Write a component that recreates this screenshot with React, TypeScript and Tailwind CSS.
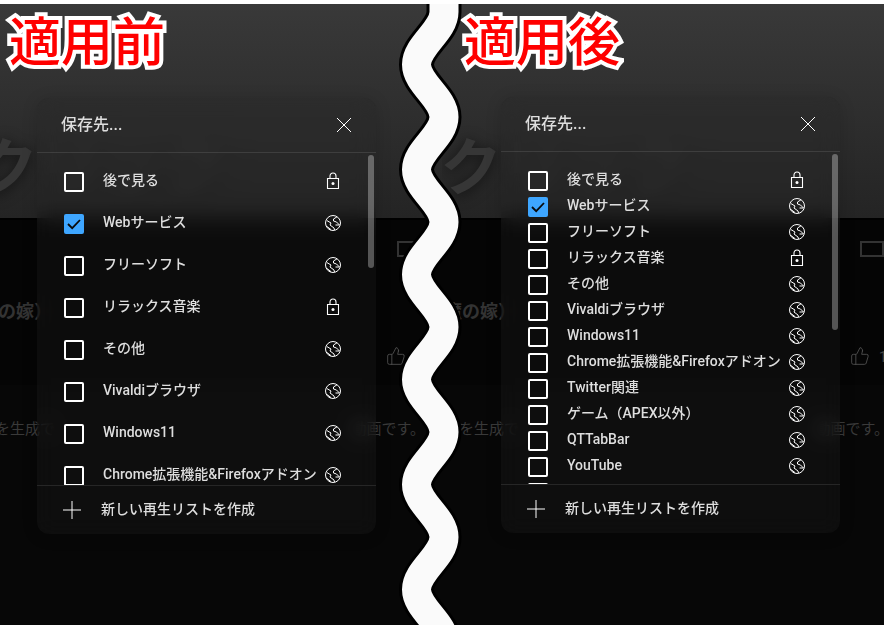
import { ThumbsUp } from 'lucide-react';

const font = "font-['Roboto','Noto_Sans_CJK_JP',sans-serif]";

const before = [
  { name: '後で見る', lock: true },
  { name: 'Webサービス', checked: true },
  { name: 'フリーソフト' },
  { name: 'リラックス音楽', lock: true },
  { name: 'その他' },
  { name: 'Vivaldiブラウザ' },
  { name: 'Windows11' },
  { name: 'Chrome拡張機能&Firefoxアドオン' },
];

const after = [
  { name: '後で見る', lock: true },
  { name: 'Webサービス', checked: true },
  { name: 'フリーソフト' },
  { name: 'リラックス音楽', lock: true },
  { name: 'その他' },
  { name: 'Vivaldiブラウザ' },
  { name: 'Windows11' },
  { name: 'Chrome拡張機能&Firefoxアドオン' },
  { name: 'Twitter関連' },
  { name: 'ゲーム（APEX以外）' },
  { name: 'QTTabBar' },
  { name: 'YouTube' },
  { name: '' },
];

function Globe() {
  return (
    <svg width="18" height="18" viewBox="0 0 18 18" fill="none" stroke="white" strokeWidth="1">
      <circle cx="9" cy="9" r="7.5" />
      <path d="M2.3 12 L7 15.6 M2.8 6.5 L7 9 L6 11 L10 14 L10.5 16 M13 2.8 L9.5 5 L9.5 7 L12.5 8 L15.5 11 L11.5 11" />
    </svg>
  );
}

function Lock() {
  return (
    <svg width="14" height="18" viewBox="0 0 14 18" fill="none" stroke="white" strokeWidth="1.1">
      <path d="M1.5 6.5 H12.5 V16.5 H1.5 Z M4 6.5 V4 C4 2.2 5.2 1 7 1 C8.8 1 10 2.2 10 4 V6.5" />
      <circle cx="7" cy="11.5" r="1.5" fill="white" stroke="none" />
    </svg>
  );
}

function Row({ name, lock, checked, rowClass }: { name: string; lock?: boolean; checked?: boolean; rowClass: string }) {
  return (
    <div className={`flex items-center shrink-0 pl-[27px] pr-[34px] ${rowClass}`}>
      {checked ? (
        <div className="w-5 h-5 rounded-[2px] bg-[#3ea6ff] flex items-center justify-center shrink-0">
          <svg width="16" height="16" viewBox="0 0 16 16" fill="none" stroke="#0a0a0a" strokeWidth="1.8">
            <path d="M2 8 L6.2 12.2 L14 4" />
          </svg>
        </div>
      ) : (
        <div className="w-5 h-5 rounded-[2px] border-2 border-white shrink-0" />
      )}
      <span className="ml-[19px] flex-1 text-[14px] leading-none font-medium text-[#dedede] whitespace-nowrap -translate-y-0.5">{name}</span>
      <div className="w-[18px] flex justify-center shrink-0 -translate-y-px">{name && (lock ? <Lock /> : <Globe />)}</div>
    </div>
  );
}

function Panel({ items, rowClass, listClass, thumbClass, panelClass }: {
  items: { name: string; lock?: boolean; checked?: boolean }[];
  rowClass: string;
  listClass: string;
  thumbClass: string;
  panelClass: string;
}) {
  return (
    <div className={`absolute w-[339px] h-[436px] rounded-xl bg-[#242424]/25 backdrop-blur-[10px] shadow-[0_2px_16px_rgba(0,0,0,0.15)] flex flex-col ${panelClass}`}>
      <div className="h-[55px] shrink-0 border-b border-white/10 flex items-center justify-between pl-[24px] pr-[24px]">
        <span className="text-[16px] font-medium text-[#dedede]">保存先...</span>
        <svg width="16" height="16" viewBox="0 0 16 16" stroke="white" strokeWidth="1">
          <path d="M1 1 L15 15 M15 1 L1 15" />
        </svg>
      </div>
      <div className={`relative h-[332px] overflow-hidden flex flex-col ${listClass}`}>
        {items.map(item => (
          <Row key={item.name || 'next'} {...item} rowClass={rowClass} />
        ))}
        <div className={`absolute right-[2px] w-1.5 top-[2px] rounded-[3px] bg-white/30 ${thumbClass}`} />
      </div>
      <div className="flex-1 border-t border-white/10 flex items-center pl-[26px]">
        <svg width="18" height="18" viewBox="0 0 18 18" stroke="white" strokeWidth="1">
          <path d="M9 0 V18 M0 9 H18" />
        </svg>
        <span className="ml-[20px] text-[14px] font-medium text-[#dedede] -translate-y-px">新しい再生リストを作成</span>
      </div>
    </div>
  );
}

function Backdrop({ side }: { side: 'left' | 'right' }) {
  const isLeft = side === 'left';
  return (
    <div className="absolute inset-0 flex flex-col">
      <div className="relative h-[214px] shrink-0 bg-gradient-to-b from-[#393939] to-[#242424] overflow-hidden">
        <span className={`absolute top-[134px] text-[62px] leading-none font-bold text-[#363636] [text-shadow:0_2px_14px_rgba(0,0,0,0.55)] whitespace-nowrap ${isLeft ? '-left-[24px]' : '-left-[2px]'}`}>
          クリック
        </span>
      </div>
      <div className="h-[2px] bg-black" />
      <div className="relative h-[165px] shrink-0 bg-[#050505]">
        <div className={`absolute top-[21px] w-6 h-4 border-2 border-[#333] ${isLeft ? 'left-[397px]' : 'left-[418px]'}`} />
        <span className={`absolute top-[78px] text-[18px] font-bold text-[#333] whitespace-nowrap ${isLeft ? '-left-[2px]' : 'left-[2px]'}`}>
          {isLeft ? 'の嫁）' : '魔の嫁）'}
        </span>
        <ThumbsUp className={`absolute top-[126px] ${isLeft ? 'left-[386px]' : 'left-[408px]'}`} size={20} strokeWidth={1} color="#555" />
        {!isLeft && <span className="absolute top-[127px] left-[437px] text-[14px] text-[#444]">1</span>}
      </div>
      <div className="relative flex-1 bg-[#070707]">
        <div className={`absolute top-[33px] flex justify-between text-[15px] text-[#3a3a3a] whitespace-nowrap ${isLeft ? 'left-[-5px] w-[430px]' : 'left-[17px] w-[430px]'}`}>
          <span>を生成で</span>
          <span>動画です。</span>
        </div>
      </div>
    </div>
  );
}

function Label({ text, labelClass }: { text: string; labelClass: string }) {
  return (
    <span className={`absolute top-[8px] text-[52px] leading-[64px] font-medium text-[#ff0000] [-webkit-text-stroke:8px_white] [paint-order:stroke_fill] whitespace-nowrap ${labelClass}`}>
      {text}
    </span>
  );
}

// sine-like squiggle: alternating extremes every 52.5px, y is relative to the svg (top-1)
function buildWave() {
  const half = 52.5;
  const handle = 19;
  let x = 444;
  let y = 8;
  let d = `M444 -10 L${x} ${y}`;
  for (let i = 0; i < 12; i++) {
    const nx = x === 444 ? 416.5 : 444;
    const ny = y + half;
    d += ` C${x} ${y + handle} ${nx} ${ny - handle} ${nx} ${ny}`;
    x = nx;
    y = ny;
  }
  return d;
}

const wave = buildWave();

export default function App() {
  return (
    <div className={`relative w-[884px] h-[625px] overflow-hidden bg-white ${font}`}>
      <div className="h-1 bg-white" />
      <div className="flex h-[621px]">
        <section className="relative w-[442px] overflow-hidden">
          <Backdrop side="left" />
          <Panel
            items={before}
            rowClass="h-[42px]"
            listClass="pt-2"
            thumbClass="h-[113px]"
            panelClass="left-[37px] top-[94px]"
          />
          <Label text="適用前" labelClass="left-[9px]" />
        </section>
        <section className="relative w-[442px] overflow-hidden">
          <Backdrop side="right" />
          <Panel
            items={after}
            rowClass="h-[26px]"
            listClass="pt-4"
            thumbClass="h-[176px]"
            panelClass="left-[59px] top-[93px]"
          />
          <Label text="適用後" labelClass="left-[22px]" />
        </section>
      </div>
      <svg className="absolute left-0 top-1" width="884" height="621" fill="none">
        <path d={wave} stroke="black" strokeWidth="35" />
        <path d={wave} stroke="#fafafa" strokeWidth="29" />
      </svg>
    </div>
  );
}
